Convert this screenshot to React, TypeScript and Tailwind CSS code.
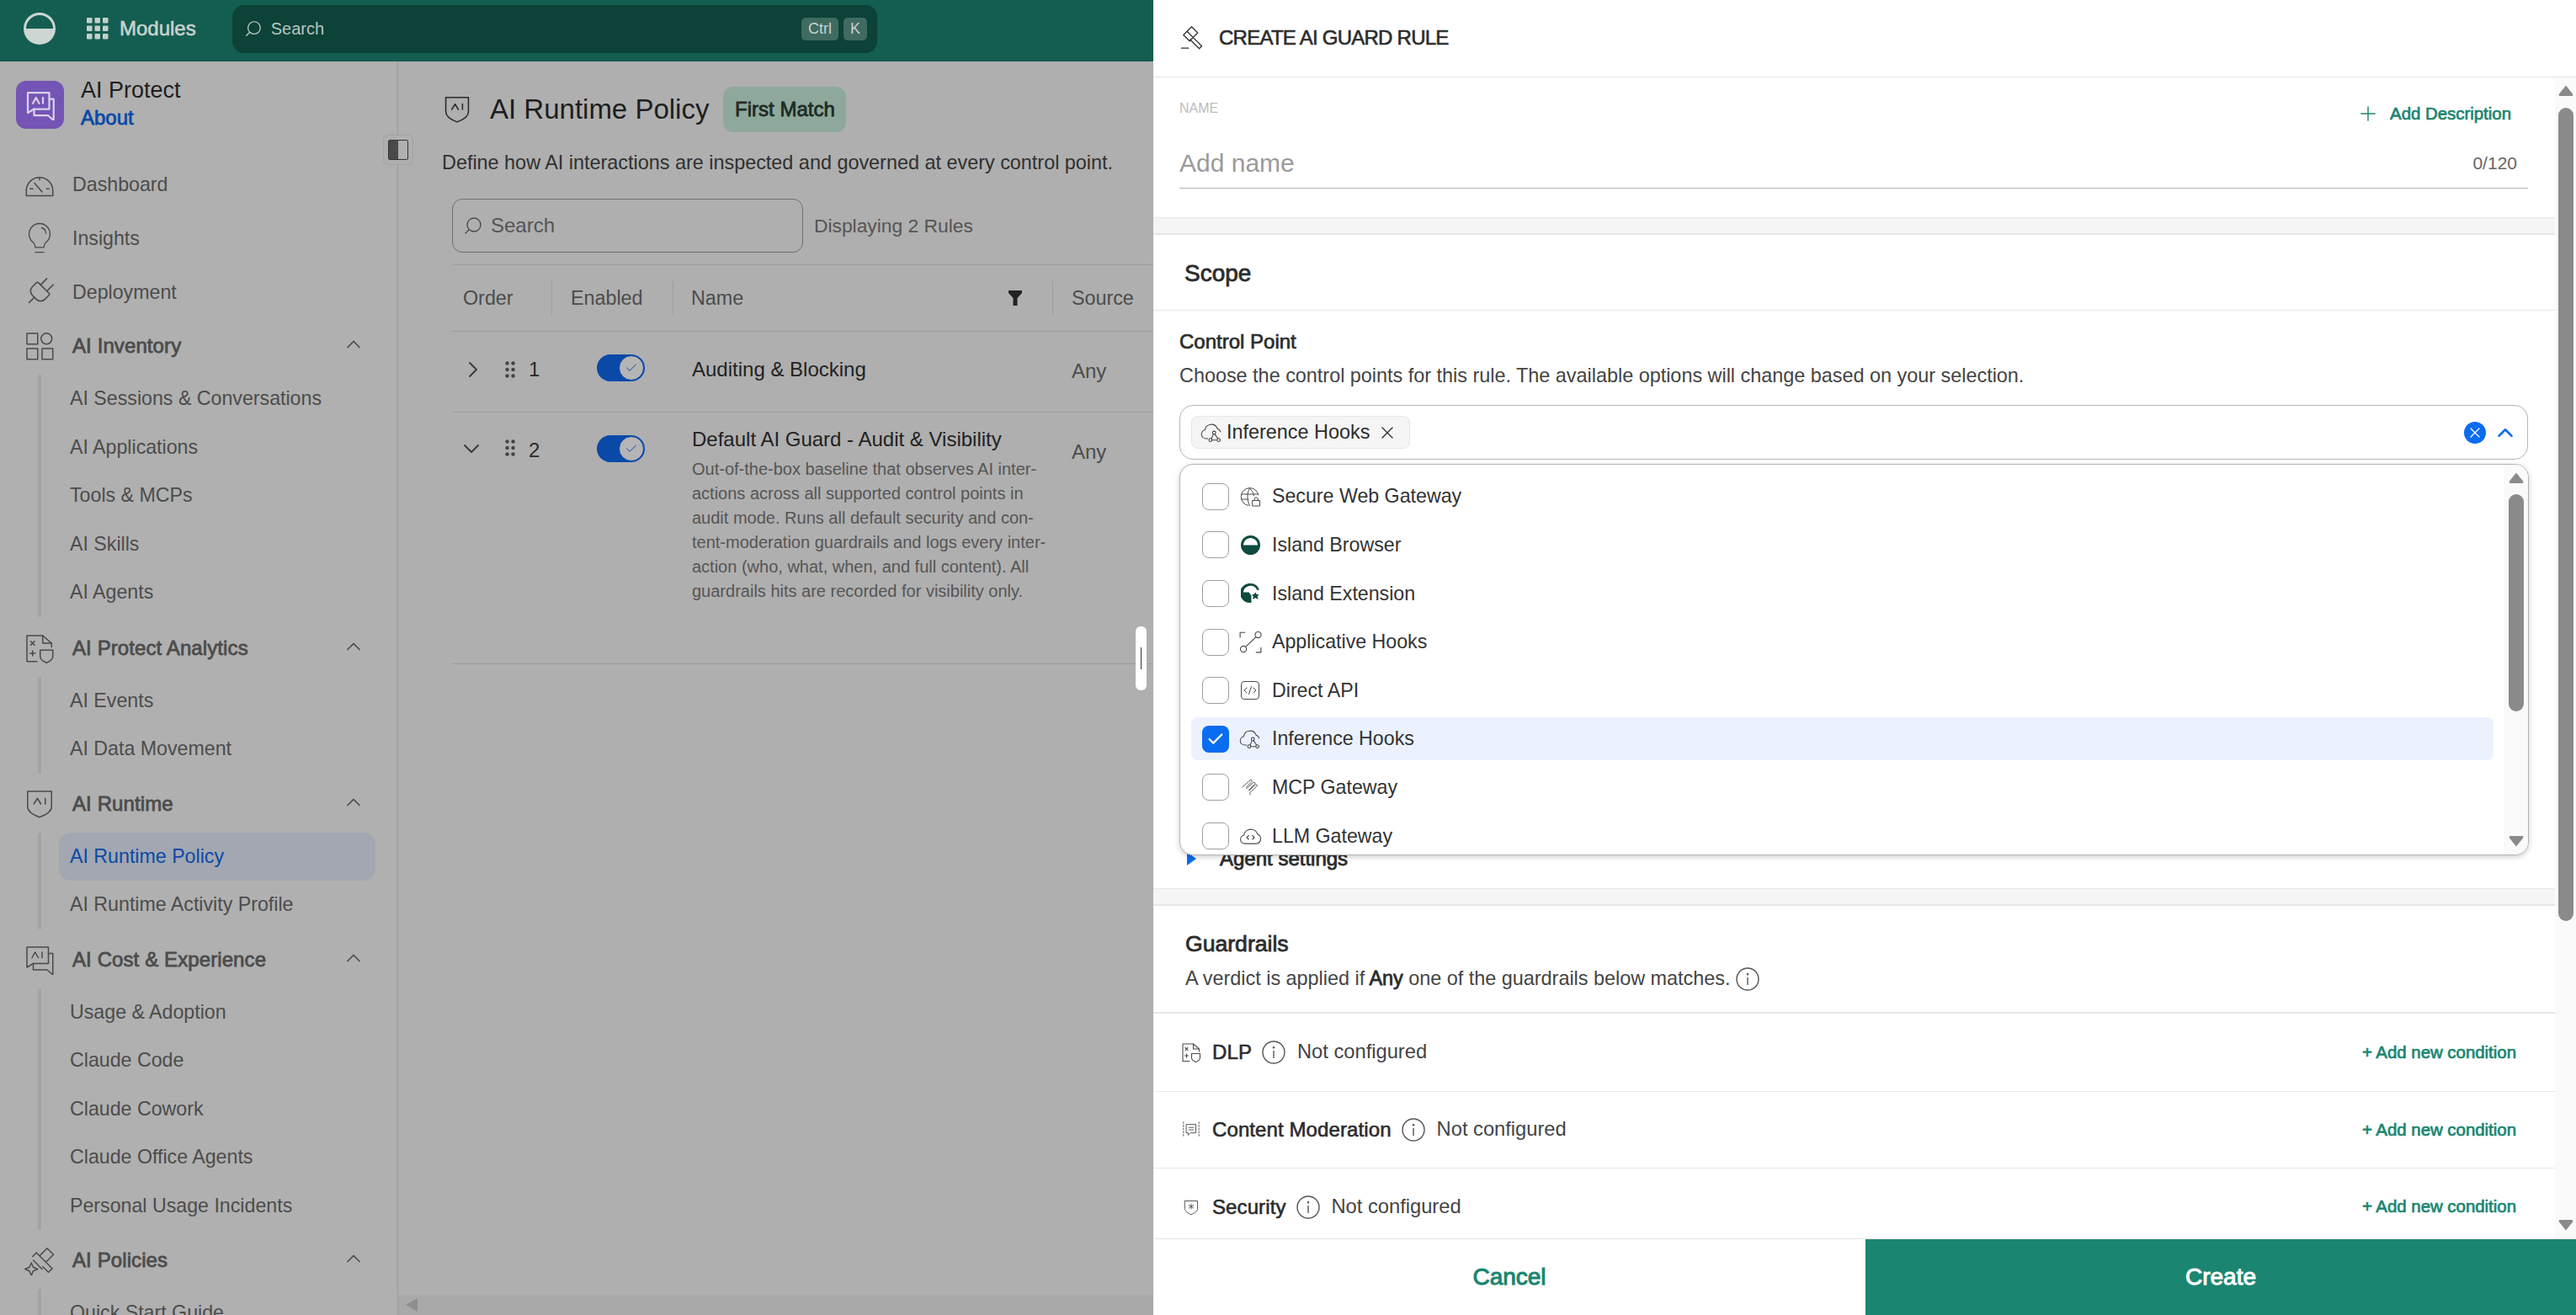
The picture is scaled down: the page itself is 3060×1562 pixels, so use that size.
import React from "react";
import { Search, ChevronUp, ChevronDown, ChevronRight, X, Plus, Check, Plug } from "lucide-react";

type IP = { s?: number; c?: string; w?: number };
const Ic = ({ s = 24, c = "", w = 1.2, children }: IP & { children: React.ReactNode }) => (
  <svg width={s} height={s} viewBox="0 0 24 24" fill="none" stroke="currentColor" strokeWidth={w} strokeLinecap="round" strokeLinejoin="round" className={`shrink-0 ${c}`}>
    {children}
  </svg>
);

const Gauge = (p: IP) => (<Ic {...p}><path d="M1.5 21v-4a10.5 10.5 0 0 1 21 0v4z" /><path d="M8 11l6 7M12 6.5v2M4.5 15.5h2.2M17.5 15.5h2" /></Ic>);
const Bulb = (p: IP) => (<Ic {...p}><path d="M12 1.5a7.5 7.5 0 0 0-4.5 13.5c1 .8 1.3 2 1.4 3.5h6.2c.1-1.500.4-2.700 1.400-3.500A7.500 7.500 0 0 0 12 1.500z" /><path d="M9 22h6M13.500 4.500c1.700.5 3 2 3 4" /></Ic>);
const Grid4 = (p: IP) => (<Ic {...p}><rect x="2" y="2" width="8.500" height="8.500" /><circle cx="17.500" cy="6.200" r="4.300" /><rect x="2" y="14" width="8.500" height="8.500" /><rect x="14" y="14" width="8.500" height="8.500" /></Ic>);
const DocShield = (p: IP) => (<Ic {...p}><path d="M10 22.500H2V2h12.500l7 6v3" /><path d="M14.500 2v6h7M5 6.500l3 3M8 6.500l-3 3M6.500 14v4M4.500 16h4" /><path d="M12.500 13.500h10v5c0 2.500-2.500 4-5 5-2.500-1-5-2.500-5-5z" /></Ic>);
const AiShield = (p: IP) => (<Ic {...p}><path d="M2.500 2h19v12c0 4-4.500 6.700-9.500 8.500C7 20.700 2.500 18 2.500 14z" /><path d="M7.500 12l2.800-4.500L13 12M16.500 7.500V12" /></Ic>);
const AiChat = (p: IP) => (<Ic {...p}><path d="M2 2h17v13H7l-5 3z" /><path d="M19 7h3.500v17l-4.500-4H7v-5" /><path d="M6 10.500l2.500-4.500 2.500 4.500M14 6v4.500" /></Ic>);
const Gavel = (p: IP) => (<Ic {...p}><path d="M12 8.500l6-6 5 5-6 6zM6.500 9l3-3 9 9M14 19l-7-7M18.500 15l3.500 3.500-3 3-4.500-4.500" /><path d="M5.500 14l1.500 3.500 3.500 1.500-3.500 1.500L5.500 24 4 20.500.5 19 4 17.500z" /></Ic>);
const GavelPlain = (p: IP) => (<Ic {...p}><path d="M12 1.500l6 6-4.500 4.500-6-6zM7.500 6L4 9.500l6 6 3.500-3.500M13 11.500l9 9-2.500 2.500-9-9M2 22.500h7" /></Ic>);
const CloudHook = (p: IP) => (<Ic {...p}><path d="M8 18.500H6a4.800 4.800 0 0 1-1-9.500 7 7 0 0 1 13.500-1.500 5.500 5.500 0 0 1 3.500 3.500" /><circle cx="15" cy="12" r="1.700" /><circle cx="11" cy="20" r="1.700" /><circle cx="20" cy="20" r="1.700" /><path d="M14.200 13.500L12 18.500M15.800 13.500L19 18.500M12.700 20h5.600" /></Ic>);
const GlobeLock = (p: IP) => (<Ic {...p}><path d="M22 10A10.500 10.500 0 1 0 10 22.500M2 9h19M2 15h8M11.500 2C8 7 8 16 11.500 22.500M11.500 2c3 3 4.500 6 5 9" /><rect x="15" y="16.500" width="8.500" height="6.500" /><path d="M17 16.500v-1.500a2.200 2.200 0 0 1 4.400 0v1.500" /></Ic>);
const IslandB = ({ s = 24 }: { s?: number }) => (
  <svg width={s} height={s} viewBox="0 0 24 24"><circle cx="12" cy="12" r="12" fill="#0e4a3d" /><path d="M3 12a9 9 0 0 1 18 0z" fill="#fff" /></svg>
);
const IslandE = ({ s = 24 }: { s?: number }) => (
  <svg width={s} height={s} viewBox="0 0 24 24"><path d="M12 0a12 12 0 0 1 11 8h-3a9 9 0 0 0-17 3h7l3 4v8.800A12 12 0 1 1 12 0z" fill="#0e4a3d" /><path d="M18 11l1.500 2.500 3 .3-2 2.200 1 3.500-3.500-1.500-3.500 1.500 1-3.500-2-2.200 3-.3z" fill="#0e4a3d" /></svg>
);
const AppHook = (p: IP) => (<Ic {...p}><path d="M1 7V2h5M18 23h5v-5" /><circle cx="20" cy="4.500" r="3.200" /><circle cx="4.500" cy="19.500" r="3.200" /><path d="M17.700 6.800L6.800 17.200" /></Ic>);
const DirectApi = (p: IP) => (<Ic {...p}><rect x="1.500" y="1.500" width="21" height="21" rx="3.500" /><path d="M8 9l-3 3 3 3M16 9l3 3-3 3M13.500 7.500l-3 9" /></Ic>);
const McpG = (p: IP) => (<Ic {...p}><path d="M2 12l10-9c1.500-1.200 3.500 .5 2 2l-7 7M7 14l9-8c1.500-1.200 3.500 .5 2 2l-8 8M11 16l8-7c1.500-1 3 .8 1.500 2L12 19c-1 1-.5 2 .5 3" /></Ic>);
const LlmCloud = (p: IP) => (<Ic {...p}><path d="M6 20.500a4.500 4.500 0 0 1-1-8.900 7.500 7.500 0 0 1 14.500-1A5.200 5.200 0 0 1 18.500 20.500z" /><path d="M10 12l-2 2 2 2M14 12l2 2-2 2" /></Ic>);
const ChatMod = (p: IP) => (<Ic {...p}><path d="M2 2v20M22 2v20" strokeDasharray="2 2" /><path d="M6 5h12v11h-7l-3 3v-3H6zM9 9h6M9 12h6" /></Ic>);
const ShieldStar = (p: IP) => (<Ic {...p}><path d="M3 3h18v11c0 4-4.500 6.500-9 8.500-4.500-2-9-4.500-9-8.500z" /><path d="M12 7.500v7M9 9l6 4M15 9l-6 4" /></Ic>);
const Info = () => (
  <svg width="28" height="28" viewBox="0 0 28 28" fill="none" stroke="#555" strokeWidth="1.400" className="shrink-0"><circle cx="14" cy="14" r="13" /><path d="M14 12v9" /><circle cx="14" cy="8.300" r=".6" fill="#555" /></svg>
);
const Drag = () => (
  <svg width="12" height="20" viewBox="0 0 12 20" fill="#444"><circle cx="2.500" cy="2.500" r="2.200" /><circle cx="9.500" cy="2.500" r="2.200" /><circle cx="2.500" cy="10" r="2.200" /><circle cx="9.500" cy="10" r="2.200" /><circle cx="2.500" cy="17.500" r="2.200" /><circle cx="9.500" cy="17.500" r="2.200" /></svg>
);
const Up = ({ c = "#8a8a8a" }: { c?: string }) => (<svg width="18" height="14" viewBox="0 0 18 14" className="shrink-0"><path d="M9 0.500l8 10q1 2.500-1 2.500H2q-2 0-1-2.500z" fill={c} /></svg>);

const Toggle = ({ c = "" }: { c?: string }) => (
  <div className={`flex items-center justify-end w-[57px] h-[32px] rounded-full bg-[#0a49a8] pr-[1px] ${c}`}>
    <div className="w-[30px] h-[30px] rounded-full bg-[#b5b5b5] border border-[#0a49a8] flex items-center justify-center">
      <Check size={16} strokeWidth={1.500} className="text-[#0a49a8]" />
    </div>
  </div>
);

const Top = ({ icon, label }: { icon: React.ReactNode; label: string }) => (
  <div className="flex items-center h-[64px] pl-[30px]">
    <div className="w-[34px] flex justify-center text-[#4a4a4a]">{icon}</div>
    <span className="ml-[22px] text-[23.200px] text-[#4c4c4c]">{label}</span>
  </div>
);
const Group = ({ icon, label }: { icon: React.ReactNode; label: string }) => (
  <div className="flex items-center h-[64px] pl-[30px] pr-[42px]">
    <div className="w-[34px] flex justify-center text-[#4a4a4a]">{icon}</div>
    <span className="ml-[22px] text-[24px] [-webkit-text-stroke:0.8px] tracking-[0.1px] text-[#4c4c4c] flex-1">{label}</span>
    <ChevronUp size={28} strokeWidth={1.500} className="text-[#4a4a4a] -mt-[4px] -mr-[4px]" />
  </div>
);
const Sub = ({ items, cls, active }: { items: string[]; cls: string; active?: string }) => (
  <div className={`relative ml-[45px] pl-[21px] border-l-[4px] border-[#a3a3a3] rounded-[2px] mr-[26px] ${cls}`}>
    {items.map((t) =>
      t === active ? (
        <div key={t} className="h-[57.500px] flex items-center pl-[13px] rounded-[14px] bg-[#a2a7b1] text-[23.200px] text-[#0a49a8]">{t}</div>
      ) : (
        <div key={t} className="h-[57.500px] flex items-center pl-[13px] text-[23.200px] text-[#4c4c4c] whitespace-nowrap">{t}</div>
      )
    )}
  </div>
);

const Sidebar = () => (
  <aside className="w-[473px] shrink-0 border-r border-[#9b9b9b] bg-[#b0b0b0] overflow-hidden">
    <div className="flex h-[114px] pl-[19px] pt-[23px]">
      <div className="w-[57px] h-[57px] rounded-[12px] bg-[#7454b4] flex items-center justify-center text-[#d9d0ec]">
        <AiChat s={36} w={1.500} />
      </div>
      <div className="ml-[20px] -mt-[7px]">
        <div className="text-[27px] leading-[36px] text-[#1e1e1e]">AI Protect</div>
        <div className="text-[24px] leading-[30px] [-webkit-text-stroke:0.8px] text-[#0a49a8]">About</div>
      </div>
    </div>
    <Top icon={<Gauge s={36} w={1} />} label="Dashboard" />
    <Top icon={<Bulb s={40} w={0.800} />} label="Insights" />
    <Top icon={<Plug size={42} strokeWidth={0.900} className="rotate-45 shrink-0" />} label="Deployment" />
    <Group icon={<Grid4 s={36} w={1} />} label="AI Inventory" />
    <Sub cls="mt-[2px] mb-[5px]" items={["AI Sessions & Conversations", "AI Applications", "Tools & MCPs", "AI Skills", "AI Agents"]} />
    <Group icon={<DocShield s={36} w={1} />} label="AI Protect Analytics" />
    <Sub cls="mt-[2px] mb-[4px]" items={["AI Events", "AI Data Movement"]} />
    <Group icon={<AiShield s={36} w={1} />} label="AI Runtime" />
    <Sub cls="mt-[2px] mb-[4px]" active="AI Runtime Policy" items={["AI Runtime Policy", "AI Runtime Activity Profile"]} />
    <Group icon={<AiChat s={36} w={1} />} label="AI Cost & Experience" />
    <Sub cls="mt-[2px] mb-[4px]" items={["Usage & Adoption", "Claude Code", "Claude Cowork", "Claude Office Agents", "Personal Usage Incidents"]} />
    <Group icon={<Gavel s={36} w={1} />} label="AI Policies" />
    <Sub cls="mt-[2px]" items={["Quick Start Guide"]} />
  </aside>
);

const Cell = ({ w, children, line = true, cls = "" }: { w: string; children: React.ReactNode; line?: boolean; cls?: string }) => (
  <div className={`${w} shrink-0 flex items-center h-[40px] ${line ? "border-r border-[#9d9d9d]" : ""} ${cls}`}>{children}</div>
);

const Main = () => (
  <main className="relative flex-1 bg-[#afafaf] overflow-hidden">
    <div className="flex items-center h-[55px] mt-[29px] pl-[53px]">
      <AiShield s={34} w={1.100} c="text-[#2a2a2a]" />
      <span className="ml-[22px] text-[33px] text-[#1e1e1e]">AI Runtime Policy</span>
      <span className="ml-[17px] flex items-center justify-center w-[146px] h-[54px] rounded-[12px] bg-[#8ea99c] text-[24px] [-webkit-text-stroke:0.8px] text-[#1f2a26]">First Match</span>
    </div>
    <div className="mt-[20px] ml-[52px] text-[23.400px] leading-[32px] text-[#303030] whitespace-nowrap">Define how AI interactions are inspected and governed at every control point.</div>
    <div className="flex items-center mt-[27px] ml-[64px]">
      <div className="flex items-center w-[417px] h-[64px] rounded-[12px] border-[1.500px] border-[#707070] pl-[12px]">
        <Search size={24} strokeWidth={1.300} className="text-[#444] -scale-x-100" />
        <span className="ml-[9px] text-[24px] text-[#555]">Search</span>
      </div>
      <span className="ml-[13px] text-[22.800px] text-[#555]">Displaying 2 Rules</span>
    </div>
    <div className="ml-[64px] mt-[14px] border-t border-[#9d9d9d]">
      <div className="flex items-center h-[79px] border-b border-[#9d9d9d] text-[23.300px] text-[#4c4c4c]">
        <Cell w="w-[119px]" cls="pl-[13px]">Order</Cell>
        <Cell w="w-[144px]" cls="pl-[22px]">Enabled</Cell>
        <Cell w="w-[451px]" cls="pl-[21px]">
          <span className="flex-1">Name</span>
          <svg width="16" height="18" viewBox="0 0 16 18" fill="#222" className="mr-[36px]"><path d="M0 0h16v3l-5.500 6v9H5.500V9L0 3z" /></svg>
        </Cell>
        <Cell w="w-[110px]" line={false} cls="pl-[22px]">Source</Cell>
      </div>
      <div className="flex items-center h-[96px] pb-[5px] border-b border-[#9d9d9d] text-[24px]">
        <ChevronRight size={32} strokeWidth={1.400} className="ml-[9px] text-[#3a3a3a]" />
        <span className="ml-[22px]"><Drag /></span>
        <span className="ml-[16px] w-[81px] text-[#2a2a2a]">1</span>
        <Toggle c="-mt-[4px]" />
        <span className="ml-[56px] w-[451px] text-[#222]">Auditing &amp; Blocking</span>
        <span className="text-[#4c4c4c] mt-[4px]">Any</span>
      </div>
      <div className="relative h-[299px] border-b border-[#9d9d9d]">
        <div className="flex items-start pt-[27px] text-[24px]">
          <ChevronDown size={32} strokeWidth={1.400} className="ml-[7px] text-[#3a3a3a]" />
          <span className="ml-[24px] mt-[5px]"><Drag /></span>
          <span className="ml-[16px] w-[81px] text-[#2a2a2a]">2</span>
          <Toggle />
          <div className="ml-[56px] w-[451px] -mt-[13px]">
            <div className="text-[24px] leading-[36px] text-[#222]">Default AI Guard - Audit &amp; Visibility</div>
            <div className="text-[20px] leading-[29px] mt-[3px] text-[#555] whitespace-pre-line">{"Out-of-the-box baseline that observes AI inter-\nactions across all supported control points in\naudit mode. Runs all default security and con-\ntent-moderation guardrails and logs every inter-\naction (who, what, when, and full content). All\nguardrails hits are recorded for visibility only."}</div>
          </div>
          <span className="text-[#4c4c4c] mt-[2px]">Any</span>
        </div>
      </div>
    </div>
    <div className="absolute left-[876px] top-[671px] w-[13px] h-[76px] rounded-[6px] bg-white flex items-center justify-center">
      <div className="w-[1.500px] h-[26px] bg-[#333]" />
    </div>
    <div className="absolute left-0 right-0 bottom-0 h-[24px] bg-[#a9a9a9] pl-[8px] flex items-center">
      <svg width="16" height="18" viewBox="0 0 16 18"><path d="M15 1v16L1 9z" fill="#8e8e8e" /></svg>
    </div>
  </main>
);

const options: { t: string; i: React.ReactNode; on?: boolean }[] = [
  { t: "Secure Web Gateway", i: <GlobeLock s={24} w={1} /> },
  { t: "Island Browser", i: <IslandB s={23} /> },
  { t: "Island Extension", i: <IslandE s={23} /> },
  { t: "Applicative Hooks", i: <AppHook s={27} w={1} /> },
  { t: "Direct API", i: <DirectApi s={24} w={1} /> },
  { t: "Inference Hooks", i: <CloudHook s={26} w={1} />, on: true },
  { t: "MCP Gateway", i: <McpG s={22} w={1} /> },
  { t: "LLM Gateway", i: <LlmCloud s={27} w={1} /> },
];

const Dropdown = () => (
  <div className="absolute left-[31px] top-[459px] w-[1603px] h-[465px] rounded-[16px] border border-[#b5b5b5] bg-white shadow-[0_2px_6px_rgba(0,0,0,0.2)] overflow-hidden flex">
    <div className="flex-1 pl-[13px] pr-[12px] pt-[9px]">
      {options.map((o) => (
        <div key={o.t} className="flex items-center h-[57.600px] shrink-0">
          <div className={`flex items-center w-full h-[51px] rounded-[8px] pl-[13px] ${o.on ? "bg-[#ebf2fe]" : ""}`}>
            {o.on ? (
              <div className="w-[32px] h-[32px] rounded-[8px] bg-[#0a6cf0] flex items-center justify-center"><Check size={22} strokeWidth={2.500} className="text-white" /></div>
            ) : (
              <div className="w-[32px] h-[32px] rounded-[8px] border border-[#9f9f9f]" />
            )}
            <div className="w-[28px] ml-[11px] flex justify-center text-[#4a4a4a]">{o.i}</div>
            <span className="ml-[12px] text-[23.200px] text-[#333]">{o.t}</span>
          </div>
        </div>
      ))}
    </div>
    <div className="w-[29px] bg-[#fafafa] flex flex-col items-center pt-[9px]">
      <Up />
      <div className="w-[18px] h-[258px] mt-[12px] rounded-full bg-[#8a8a8a]" />
      <div className="mt-auto mb-[9px] rotate-180"><Up /></div>
    </div>
  </div>
);

const GRow = ({ icon, label, bot = true, h }: { icon: React.ReactNode; label: string; bot?: boolean; h: string }) => (
  <div className={`flex items-center ${h} ${bot ? "border-b border-[#e8e8e8]" : ""} pl-[33px] pr-[46px] shrink-0`}>
    <div className="w-[24px] flex justify-center text-[#4a4a4a]">{icon}</div>
    <span className="ml-[13px] text-[24px] tracking-[0.1px] [-webkit-text-stroke:0.6px] text-[#2c2c2c]">{label}</span>
    <span className="ml-[12px]"><Info /></span>
    <span className="ml-[14px] text-[23.700px] text-[#444] flex-1">Not configured</span>
    <span className="text-[20.400px] [-webkit-text-stroke:0.7px] text-[#1a8570]">+ Add new condition</span>
  </div>
);

const Band = () => <div className="h-[21px] shrink-0 bg-[#f5f5f5] border-t border-[#e6e6e6] border-b-2" />;

const Panel = () => (
  <section className="flex-1 flex flex-col bg-white">
    <div className="h-[92px] shrink-0 flex items-center pl-[31px] pb-[2px] border-b border-[#e6e6e6]">
      <GavelPlain s={29} w={1.100} c="text-[#333]" />
      <span className="ml-[18px] text-[24px] tracking-[-0.750px] [-webkit-text-stroke:0.6px] text-[#2c2c2c]">CREATE AI GUARD RULE</span>
    </div>
    <div className="flex-1 flex min-h-0">
      <div className="relative flex-1 min-w-0 overflow-hidden flex flex-col">
        <div className="relative h-[166px] shrink-0 pl-[31px] pr-[32px]">
          <div className="pt-[27px] text-[16px] leading-[20px] text-[#bcbcbc]">NAME</div>
          <div className="absolute right-[52px] top-[28px] flex items-center text-[#1a8570]">
            <Plus size={28} strokeWidth={1.200} />
            <span className="ml-[12px] text-[20.400px] [-webkit-text-stroke:0.7px]">Add Description</span>
          </div>
          <div className="flex items-center justify-between h-[60px] mt-[25px] border-b border-[#b5b5b5]">
            <span className="text-[30px] text-[#9a9a9a]">Add name</span>
            <span className="mr-[13px] text-[21px] text-[#666]">0/120</span>
          </div>
        </div>
        <Band />
        <div className="h-[90px] shrink-0 flex items-center pl-[37px] pt-[2px] border-b border-[#e6e6e6]">
          <span className="text-[28px] [-webkit-text-stroke:0.8px] text-[#2c2c2c]">Scope</span>
        </div>
        <div className="h-[686px] shrink-0 pl-[31px] pr-[32px] flex flex-col">
          <div className="mt-[21px] text-[24px] leading-[32px] [-webkit-text-stroke:0.7px] text-[#2c2c2c]">Control Point</div>
          <div className="mt-[8px] text-[23.400px] leading-[32px] text-[#444]">Choose the control points for this rule. The available options will change based on your selection.</div>
          <div className="mt-[19px] h-[65px] rounded-[16px] border border-[#b5b5b5] flex items-center pl-[13px] pr-[11px]">
            <div className="flex items-center w-[260px] h-[39px] rounded-[8px] bg-[#f5f5f5] border border-[#e6e6e6] pl-[10px]">
              <span className="text-[#444]"><CloudHook s={26} w={1} /></span>
              <span className="ml-[5px] text-[23.400px] text-[#2c2c2c]">Inference Hooks</span>
              <X size={24} strokeWidth={1.400} className="ml-[9px] text-[#333]" />
            </div>
            <div className="ml-auto flex items-center gap-[8px]">
              <div className="w-[26px] h-[26px] rounded-full bg-[#0a6cf0] flex items-center justify-center"><X size={20} strokeWidth={1.500} className="text-white" /></div>
              <ChevronUp size={30} strokeWidth={2} className="text-[#0a6cf0]" />
            </div>
          </div>
          <div className="mt-auto mb-[17px] flex items-center pl-[9px]">
            <svg width="11" height="16" viewBox="0 0 11 16" fill="#0a6cf0"><path d="M0 0l11 8-11 8z" /></svg>
            <span className="ml-[28px] text-[24px] [-webkit-text-stroke:0.8px] text-[#2c2c2c]">Agent settings</span>
          </div>
        </div>
        <Band />
        <div className="h-[128px] shrink-0 pl-[38px] border-b-2 border-[#e6e6e6]">
          <div className="mt-[27px] text-[26.600px] leading-[36px] [-webkit-text-stroke:0.8px] text-[#2c2c2c]">Guardrails</div>
          <div className="mt-[6px] flex items-center text-[23.400px] text-[#444]">
            <span>A verdict is applied if <b className="font-normal [-webkit-text-stroke:0.8px] text-[#2c2c2c]">Any</b> one of the guardrails below matches.</span>
            <span className="ml-[6px]"><Info /></span>
          </div>
        </div>
        <GRow h="h-[93px]" icon={<DocShield s={24} w={1.100} />} label="DLP" />
        <GRow h="h-[91px]" icon={<ChatMod s={22} w={1} />} label="Content Moderation" />
        <GRow h="h-[91px]" icon={<ShieldStar s={20} w={1.100} />} label="Security" bot={false} />
        <Dropdown />
      </div>
      <div className="w-[25px] shrink-0 bg-[#fafafa] flex flex-col items-center pt-[9px] pl-[1px]">
        <Up />
        <div className="w-[18px] h-[966px] mt-[13px] rounded-full bg-[#8a8a8a]" />
        <div className="mt-[354px] rotate-180"><Up /></div>
      </div>
    </div>
    <div className="h-[91px] shrink-0 flex border-t border-[#e6e6e6]">
      <div className="w-[846px] flex items-center justify-center text-[28px] [-webkit-text-stroke:1px] text-[#1a8570]">Cancel</div>
      <div className="flex-1 flex items-center justify-center bg-[#1a8570] text-[28px] [-webkit-text-stroke:1px] text-white">Create</div>
    </div>
  </section>
);

export default function App() {
  return (
    <div className="flex w-[3060px] h-[1562px] overflow-hidden font-['Liberation_Sans',sans-serif]">
      <div className="w-[1370px] shrink-0 flex flex-col">
        <header className="h-[73px] shrink-0 bg-[#135e50] flex items-center pl-[28px] pr-[328px] pb-[5px]">
          <svg width="38" height="38" viewBox="0 0 38 38"><circle cx="19" cy="19" r="19" fill="#ccd6d3" /><path d="M3 19a16 16 0 0 1 32 0z" fill="#135e50" /></svg>
          <svg width="26" height="26" viewBox="0 0 26 26" fill="#c3cfcb" className="ml-[37px]"><rect width="6.500" height="6.500" rx="1" /><rect x="9.500" width="6.500" height="6.500" rx="1" /><rect x="19" width="6.500" height="6.500" rx="1" /><rect y="9.500" width="6.500" height="6.500" rx="1" /><rect x="9.500" y="9.500" width="6.500" height="6.500" rx="1" /><rect x="19" y="9.500" width="6.500" height="6.500" rx="1" /><rect y="19" width="6.500" height="6.500" rx="1" /><rect x="9.500" y="19" width="6.500" height="6.500" rx="1" /><rect x="19" y="19" width="6.500" height="6.500" rx="1" /></svg>
          <span className="ml-[13px] text-[24px] [-webkit-text-stroke:0.6px] text-[#c8d3cf]">Modules</span>
          <div className="ml-[43px] flex-1 h-[57px] rounded-[14px] bg-[#0c4237] flex items-center pl-[14px] pr-[12px]">
            <Search size={22} strokeWidth={1.300} className="text-[#c8d3cf] -scale-x-100" />
            <span className="ml-[10px] text-[20px] text-[#b9c6c2] flex-1">Search</span>
            <span className="px-[8px] h-[27px] flex items-center rounded-[5px] bg-[#3f6b61] text-[18px] text-[#c8d3cf]">Ctrl</span>
            <span className="ml-[6px] w-[28px] h-[27px] flex items-center justify-center rounded-[5px] bg-[#3f6b61] text-[18px] text-[#c8d3cf]">K</span>
          </div>
        </header>
        <div className="relative flex flex-1 min-h-0">
          <Sidebar />
          <Main />
          <div className="absolute left-[455px] top-[87px] w-[36px] h-[36px] rounded-[6px] border border-[#a3a3a3] bg-[#afafaf] flex items-center justify-center">
            <div className="flex w-[24px] h-[24px] border-[1.500px] border-[#333] rounded-[2px]">
              <div className="w-1/2 bg-[#4a4a4a]" />
            </div>
          </div>
        </div>
      </div>
      <Panel />
    </div>
  );
}
